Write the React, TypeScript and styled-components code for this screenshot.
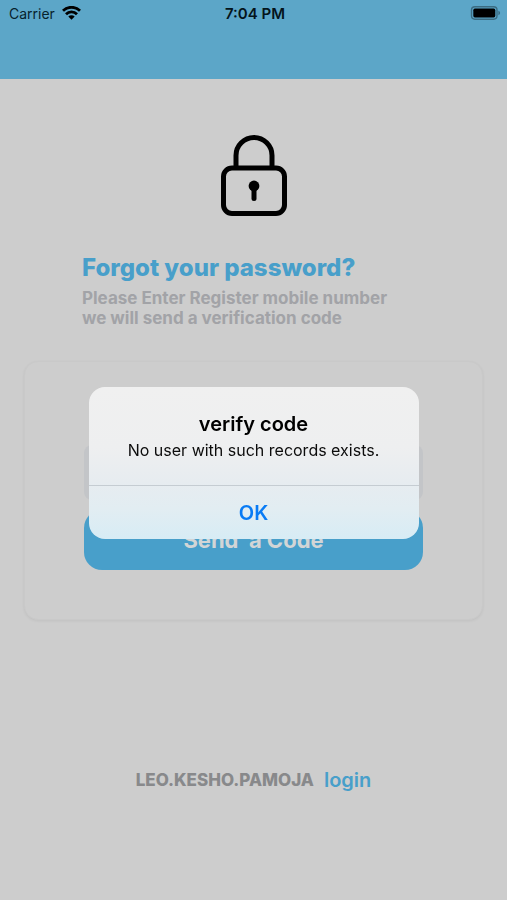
import React from "react";
import styled, { createGlobalStyle } from "styled-components";

const GlobalStyle = createGlobalStyle`
  *, *::before, *::after { box-sizing: border-box; }
  body {
    margin: 0;
    background: #cdcdcd;
    font-family: Inter, "Liberation Sans", sans-serif;
    color: #000;
  }
  h1, h2, p { margin: 0; }
`;

const Screen = styled.div`
  min-height: 100vh;
  display: flex;
  flex-direction: column;
`;

const Header = styled.header`
  height: 79px;
  background: #5ca6c8;
`;

const StatusBar = styled.div`
  display: grid;
  grid-template-columns: 1fr auto 1fr;
  align-items: center;
  height: 26px;
  padding: 0 6px 0 9px;
  font-size: 14px;
  color: #07222d;
`;

const Carrier = styled.span`
  display: flex;
  align-items: center;
  gap: 7px;
`;

const Clock = styled.time`
  font-size: 15px;
  font-weight: 600;
  color: #04141b;
`;

const BatterySlot = styled.span`
  display: flex;
  justify-content: flex-end;
`;

const Main = styled.main`
  display: flex;
  flex-direction: column;
  flex: 1;
  padding: 54px 24px 0;
`;

const LockIcon = styled.svg`
  align-self: center;
  display: block;
`;

const Intro = styled.section`
  padding: 35px 58px 0;
`;

const Title = styled.h1`
  font-size: 24px;
  line-height: 32px;
  font-weight: 800;
  color: #489fca;
`;

const Description = styled.p`
  margin-top: 4px;
  font-size: 17px;
  line-height: 20px;
  font-weight: 700;
  color: #a2a3a7;
`;

const FormCard = styled.form`
  display: flex;
  flex-direction: column;
  gap: 10px;
  margin-top: 33px;
  padding: 83px 59px 49px;
  border: 1px solid #c9c9c9;
  border-radius: 14px;
  background: #cdcdcd;
  box-shadow: 0 1px 3px rgba(0, 0, 0, 0.06);
`;

const PhoneInput = styled.input`
  width: 100%;
  height: 55px;
  padding: 0 16px;
  border: 0;
  border-radius: 8px;
  background: #c3c5c8;
  font: inherit;
`;

const SendButton = styled.button`
  height: 60px;
  padding: 0;
  border: 0;
  border-radius: 18px;
  background: #489fca;
  color: #d2d5d6;
  font: inherit;
  font-size: 22px;
  font-weight: 700;
  white-space: pre;
`;

const Footer = styled.footer`
  display: flex;
  justify-content: center;
  align-items: center;
  gap: 10px;
  margin-top: 147px;
  padding-bottom: 40px;
  line-height: 26px;
`;

const Brand = styled.span`
  font-size: 17px;
  font-weight: 800;
  color: #88898b;
`;

const LoginLink = styled.a`
  font-size: 20px;
  font-weight: 600;
  color: #489fca;
  text-decoration: none;
`;

const Overlay = styled.div`
  position: fixed;
  inset: 0;
  display: flex;
  align-items: center;
  justify-content: center;
  padding-top: 26px;
`;

const Alert = styled.div`
  width: 330px;
  max-width: calc(100% - 32px);
  overflow: hidden;
  border-radius: 16px;
  background: linear-gradient(#f0f0f0 0%, #eeeff0 40%, #e7ecf0 62%, #e2edf2 80%, #d7ecf5 100%);
  text-align: center;
`;

const AlertBody = styled.div`
  padding: 24px 16px 22px;
`;

const AlertTitle = styled.h2`
  font-size: 20px;
  line-height: 26px;
  font-weight: 600;
`;

const AlertMessage = styled.p`
  font-size: 16px;
  line-height: 26px;
  color: #0c0c0c;
`;

const AlertButton = styled.button`
  display: block;
  width: 100%;
  height: 54px;
  padding: 0;
  border: 0;
  border-top: 1px solid #c5ccd2;
  background: transparent;
  color: #087bf5;
  font: inherit;
  font-size: 20px;
  font-weight: 600;
`;

function Wifi() {
  return (
    <svg width="19" height="14" viewBox="0 0 19 14" fill="none" stroke="#000" strokeWidth="2.8" aria-hidden="true">
      <path d="M1 4.8a12 12 0 0 1 17 0" />
      <path d="M4 8.200a7.800 7.800 0 0 1 11 0" />
      <path d="M9.500 13.800 6.300 10.600a4.500 4.500 0 0 1 6.400 0z" fill="#000" stroke="none" />
    </svg>
  );
}

function Battery() {
  return (
    <svg width="31" height="14" viewBox="0 0 31 14" aria-hidden="true">
      <rect x="1.5" y="0.8" width="25.5" height="12.4" rx="3.4" fill="none" stroke="#3b6c82" strokeWidth="1.4" />
      <rect x="3.3" y="2.6" width="22" height="8.8" rx="1.6" fill="#000" />
      <path d="M28.4 4.8c2.2.7 2.2 3.7 0 4.4z" fill="#3b6c82" />
    </svg>
  );
}

function Lock() {
  return (
    <LockIcon width="68" height="84" viewBox="0 0 68 84" fill="none" stroke="#000" strokeWidth="5" aria-hidden="true">
      <path d="M16 34V22.500a18 18 0 0 1 36 0V34" />
      <rect x="3.500" y="35" width="61" height="45.500" rx="8.500" />
      <circle cx="34" cy="53" r="5.400" fill="#000" stroke="none" />
      <path d="M34 54v11.500" strokeLinecap="round" />
    </LockIcon>
  );
}

export default function App() {
  return (
    <>
      <GlobalStyle />
      <Screen>
        <Header>
          <StatusBar>
            <Carrier>
              Carrier
              <Wifi />
            </Carrier>
            <Clock>7:04 PM</Clock>
            <BatterySlot>
              <Battery />
            </BatterySlot>
          </StatusBar>
        </Header>
        <Main>
          <Lock />
          <Intro>
            <Title>Forgot your password?</Title>
            <Description>
              Please Enter Register mobile number
              <br />
              we will send a verification code
            </Description>
          </Intro>
          <FormCard onSubmit={(event) => event.preventDefault()}>
            <PhoneInput type="tel" aria-label="Mobile number" />
            <SendButton type="submit">{"Send  a Code"}</SendButton>
          </FormCard>
          <Footer>
            <Brand>LEO.KESHO.PAMOJA</Brand>
            <LoginLink href="#login">login</LoginLink>
          </Footer>
        </Main>
      </Screen>
      <Overlay>
        <Alert role="alertdialog" aria-modal="true" aria-labelledby="alert-title" aria-describedby="alert-message">
          <AlertBody>
            <AlertTitle id="alert-title">verify code</AlertTitle>
            <AlertMessage id="alert-message">No user with such records exists.</AlertMessage>
          </AlertBody>
          <AlertButton type="button">OK</AlertButton>
        </Alert>
      </Overlay>
    </>
  );
}
